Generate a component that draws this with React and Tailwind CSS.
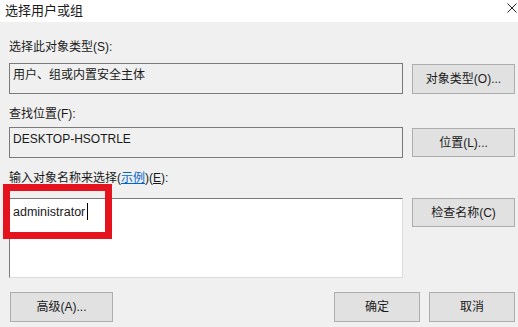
export default function App() {
  const font = { fontFamily: '"Liberation Sans", "Noto Sans CJK SC", sans-serif' };
  const btn =
    "flex items-center justify-center bg-[#e1e1e1] border border-[#adadad] text-[12px] text-[#1a1a1a] leading-4";
  return (
    <div className="relative w-[518px] h-[327px] bg-[#f0f0f0] overflow-hidden text-[#1a1a1a]" style={font}>
      {/* title bar */}
      <div className="relative h-[22px] bg-white flex items-center pl-[5px]">
        <span className="text-[13px] leading-4">选择用户或组</span>
        <svg className="absolute left-[507px] top-[3px]" width="10" height="10" viewBox="0 0 10 10">
          <path d="M0.5 0.5 L9.5 9.5 M9.5 0.5 L0.5 9.5" stroke="#222" strokeWidth="1" fill="none" />
        </svg>
      </div>

      <div className="flex flex-col pl-[9px]">
        <div className="mt-[17px] h-4 leading-4 text-[12px]">选择此对象类型(S):</div>
        <div className="mt-[8px] flex gap-[9px]">
          <div className="w-[394px] h-[31px] border border-[#7a7a7a] bg-[#f0f0f0] pl-[3px] pt-[3px] text-[12px] leading-4">
            用户、组或内置安全主体
          </div>
          <div className={`${btn} w-[103px] h-[30px] mt-px`}>对象类型(O)...</div>
        </div>

        <div className="mt-[12px] h-4 leading-4 text-[12px]">查找位置(F):</div>
        <div className="mt-[5px] flex gap-[9px]">
          <div className="w-[394px] h-[31px] border border-[#7a7a7a] bg-[#f0f0f0] pl-[3px] pt-[3px] text-[12px] leading-4">
            DESKTOP-HSOTRLE
          </div>
          <div className={`${btn} w-[103px] h-[29px] mt-px`}>位置(L)...</div>
        </div>

        <div className="mt-[12px] h-4 leading-4 text-[12px]">
          输入对象名称来选择(<span className="text-[#0066cc] underline">示例</span>)(<span className="underline">E</span>):
        </div>
        <div className="mt-[12px] flex gap-[9px]">
          <div className="w-[394px] h-[80px] border-t border-l border-t-[#7a7a7a] border-l-[#7a7a7a] border-r border-b border-r-[#dcdcdc] border-b-[#dcdcdc] bg-white pl-[3px] pt-[5px] text-[12.5px] leading-4 flex items-start">
            <span>administrator</span>
            <span className="ml-[2px] mt-[-1px] w-px h-[17px] bg-black" />
          </div>
          <div className={`${btn} w-[103px] h-[29px]`}>检查名称(C)</div>
        </div>

        <div className="mt-[14px] flex">
          <div className={`${btn} w-[103px] h-[30px] ml-px`}>高级(A)...</div>
          <div className={`${btn} w-[86px] h-[30px] ml-auto`}>确定</div>
          <div className={`${btn} w-[86px] h-[30px] ml-[9px] mr-[3px]`}>取消</div>
        </div>
      </div>

      {/* red highlight */}
      <div className="absolute left-[3px] top-[184px] w-[109px] h-[55px] border-[7px] border-[#e5131d]" />
    </div>
  );
}
